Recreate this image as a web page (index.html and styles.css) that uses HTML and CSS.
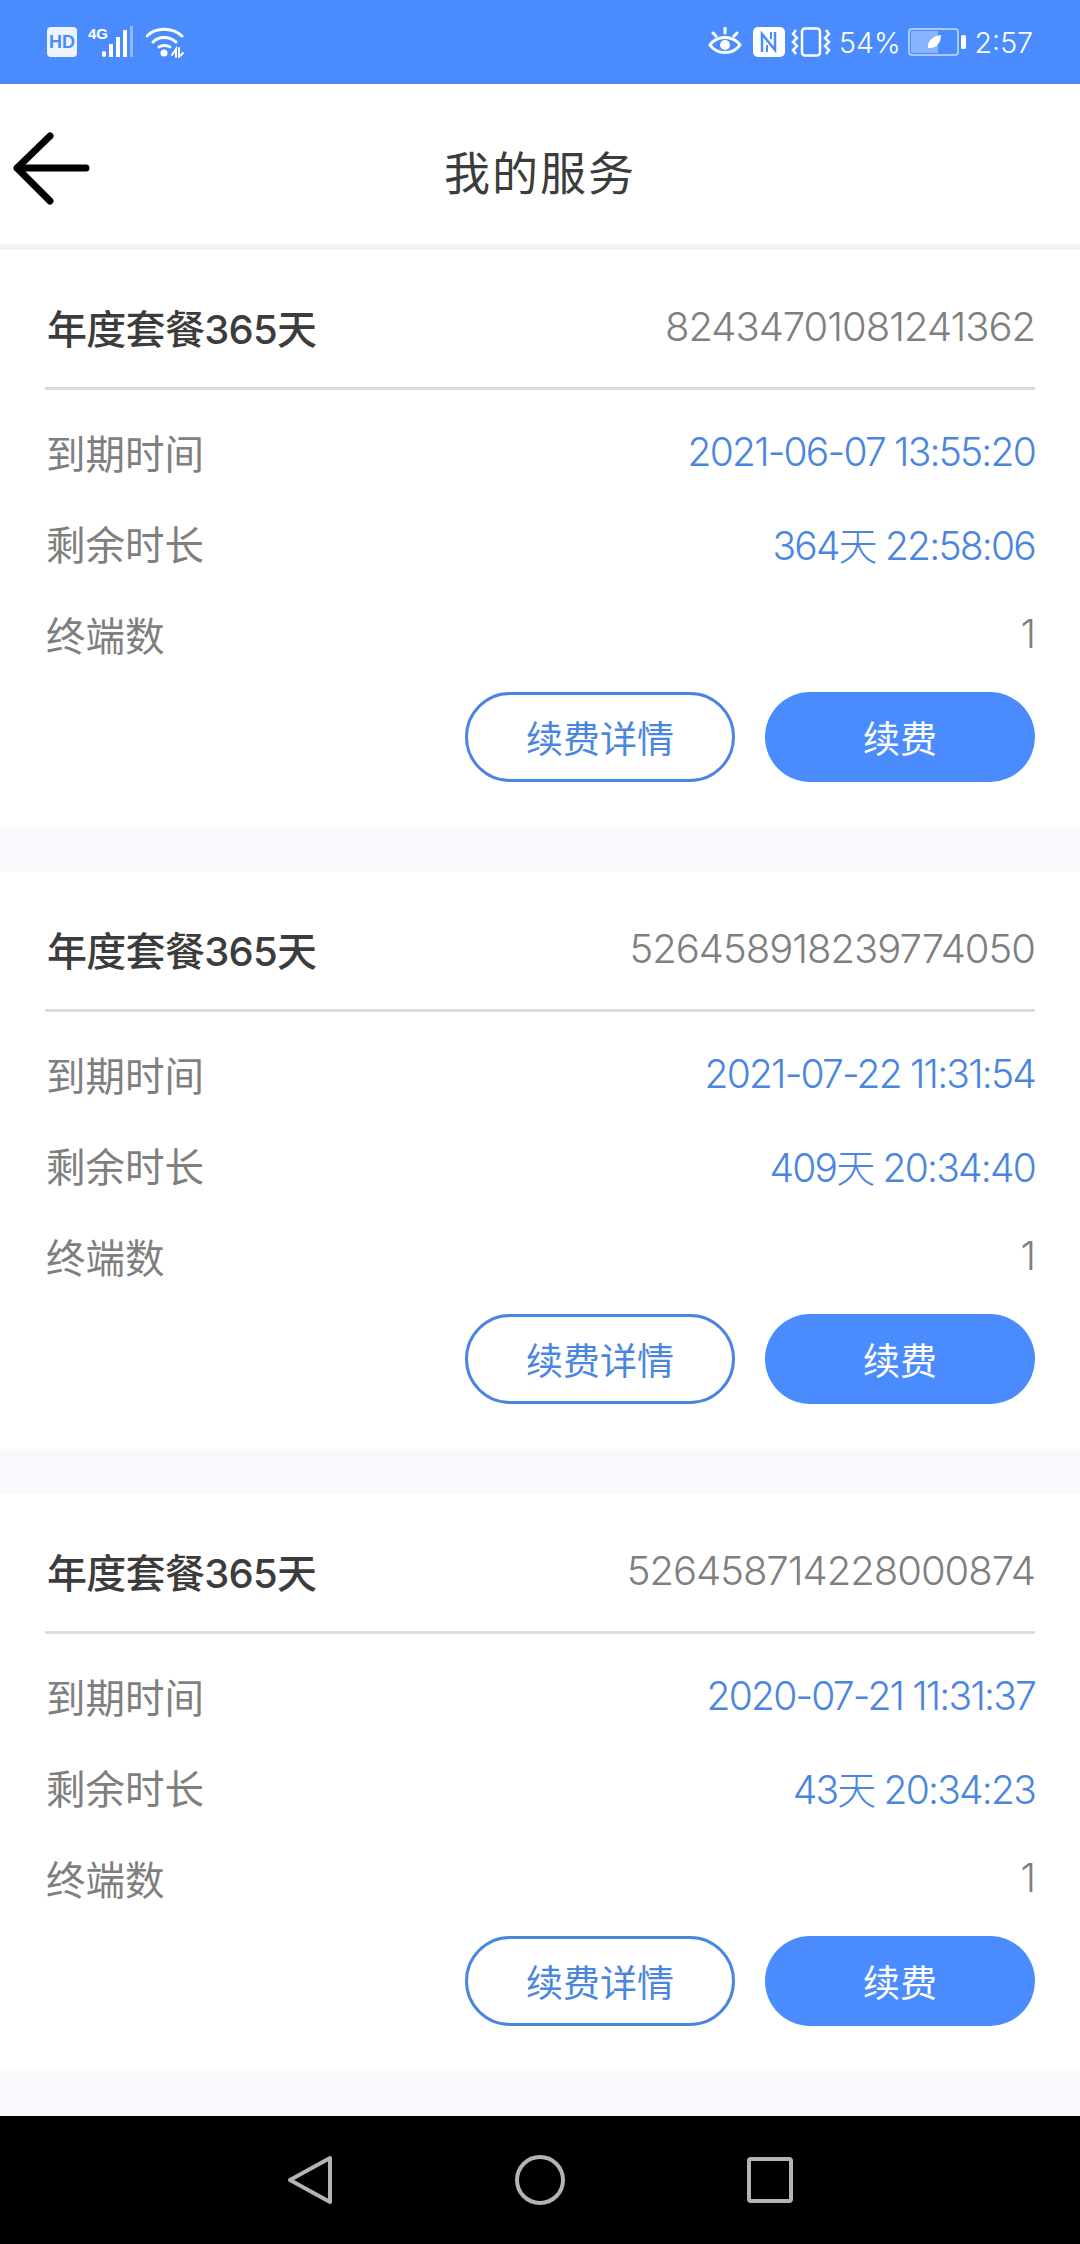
FILE: index.html
```html
<!DOCTYPE html>
<html lang="zh-CN">
<head>
    <meta charset="UTF-8">
    <meta name="viewport" content="width=device-width, initial-scale=1.0">
    <title>我的服务</title>
    <link rel="stylesheet" href="styles.css">
</head>
<body>
    <div class="status-bar">
        <div class="status-left">
            <span class="hd-badge">HD</span>
            <span class="net-label">4G</span>
            <svg class="signal" width="32" height="32" viewBox="0 0 32 32">
                <rect x="0" y="25" width="4" height="6" rx="2" fill="#fff"/>
                <rect x="7" y="18" width="4" height="13" fill="#fff"/>
                <rect x="14" y="11" width="4" height="20" fill="#fff"/>
                <rect x="21" y="4" width="4" height="27" fill="#fff"/>
                <rect x="28" y="0" width="3" height="31" fill="#fff" opacity="0.4"/>
            </svg>
            <svg class="wifi" width="38" height="32" viewBox="0 0 38 32" fill="none" stroke="#fff" stroke-width="3" stroke-linecap="round">
                <path d="M1 10C10 1 26 1 36 10"/>
                <path d="M7 16C13 10 23 10 30 16"/>
                <path d="M13 21C16 19 21 19 24 21"/>
                <circle cx="18" cy="27" r="3.5" fill="#fff" stroke="none"/>
                <path d="M26 29L30 23L30 31M33 22L33 31L37 27" stroke-width="2"/>
            </svg>
        </div>
        <div class="status-right">
            <svg class="eye" width="34" height="30" viewBox="0 0 34 30" fill="none" stroke="#fff" stroke-width="3" stroke-linecap="round">
                <path d="M2 18C9 8 25 8 32 18C25 28 9 28 2 18Z"/>
                <circle cx="17" cy="18" r="5" fill="#fff" stroke="none"/>
                <path d="M5 6L8 9M17 1L17 6M29 6L26 9"/>
            </svg>
            <svg class="nfc" width="32" height="30" viewBox="0 0 32 30">
                <rect x="0" y="0" width="32" height="30" rx="5" fill="#fff"/>
                <path d="M9 25L9 7L22 23L22 5" fill="none" stroke="#4a8cfd" stroke-width="2.5"/>
                <path d="M14 25L14 18M18 5L18 12" fill="none" stroke="#4a8cfd" stroke-width="2"/>
            </svg>
            <svg class="vibrate" width="40" height="30" viewBox="0 0 40 30" fill="none" stroke="#fff">
                <rect x="11" y="1.5" width="18" height="27" rx="3" stroke-width="2.5"/>
                <path d="M5 3L2 7L6 11L2 15L6 19L2 23L5 27" stroke-width="2.5"/>
                <path d="M35 3L38 7L34 11L38 15L34 19L38 23L35 27" stroke-width="2.5"/>
            </svg>
            <span class="percent">54%</span>
            <svg class="battery" width="58" height="28" viewBox="0 0 58 28">
                <rect x="1" y="1" width="49" height="26" rx="3" fill="none" stroke="#fff" stroke-opacity="0.7" stroke-width="1.5"/>
                <rect x="3" y="3" width="27" height="22" fill="#fff" fill-opacity="0.35"/>
                <path d="M20 20C19 12 26 8 33 7C33 15 28 21 20 20Z" fill="#fff"/>
                <rect x="53" y="7" width="5" height="14" rx="1.5" fill="#fff"/>
            </svg>
            <span class="clock">2:57</span>
        </div>
    </div>

    <header class="page-header">
        <svg class="back-arrow" width="78" height="74" viewBox="0 0 78 74" fill="none" stroke="#000" stroke-width="7" stroke-linecap="round" stroke-linejoin="round">
            <path d="M74 37L5 37M38 5L5 37L38 70"/>
        </svg>
        <h1>我的服务</h1>
    </header>

    <main class="service-list">
        <section class="card">
            <div class="card-head">
                <span class="plan-name">年度套餐365天</span>
                <span class="order-no">82434701081241362</span>
            </div>
            <div class="info-row"><span>到期时间</span><span class="value blue">2021-06-07 13:55:20</span></div>
            <div class="info-row"><span>剩余时长</span><span class="value blue">364天 22:58:06</span></div>
            <div class="info-row"><span>终端数</span><span class="value">1</span></div>
            <div class="card-actions">
                <button type="button" class="btn btn-outline">续费详情</button>
                <button type="button" class="btn btn-solid">续费</button>
            </div>
        </section>

        <section class="card">
            <div class="card-head">
                <span class="plan-name">年度套餐365天</span>
                <span class="order-no">526458918239774050</span>
            </div>
            <div class="info-row"><span>到期时间</span><span class="value blue">2021-07-22 11:31:54</span></div>
            <div class="info-row"><span>剩余时长</span><span class="value blue">409天 20:34:40</span></div>
            <div class="info-row"><span>终端数</span><span class="value">1</span></div>
            <div class="card-actions">
                <button type="button" class="btn btn-outline">续费详情</button>
                <button type="button" class="btn btn-solid">续费</button>
            </div>
        </section>

        <section class="card">
            <div class="card-head">
                <span class="plan-name">年度套餐365天</span>
                <span class="order-no">526458714228000874</span>
            </div>
            <div class="info-row"><span>到期时间</span><span class="value blue">2020-07-21 11:31:37</span></div>
            <div class="info-row"><span>剩余时长</span><span class="value blue">43天 20:34:23</span></div>
            <div class="info-row"><span>终端数</span><span class="value">1</span></div>
            <div class="card-actions">
                <button type="button" class="btn btn-outline">续费详情</button>
                <button type="button" class="btn btn-solid">续费</button>
            </div>
        </section>
    </main>

    <nav class="nav-bar">
        <svg width="46" height="50" viewBox="0 0 46 50" fill="none" stroke="#b4b4b4" stroke-width="4" stroke-linejoin="round">
            <path d="M43 3L3 25L43 47Z"/>
        </svg>
        <svg width="50" height="50" viewBox="0 0 50 50" fill="none" stroke="#b4b4b4" stroke-width="4">
            <circle cx="25" cy="25" r="23"/>
        </svg>
        <svg width="46" height="46" viewBox="0 0 46 46" fill="none" stroke="#b4b4b4" stroke-width="4" stroke-linejoin="round">
            <rect x="2" y="2" width="42" height="42" rx="2"/>
        </svg>
    </nav>
</body>
</html>
```

FILE: styles.css
```css
* {
    box-sizing: border-box;
}
body {
    font-family: Inter, "Noto Sans CJK SC", sans-serif;
    background: #f8f9fd;
    color: #7f7f7f;
    margin: 0;
    width: 1080px;
    height: 2244px;
    display: flex;
    flex-direction: column;
    overflow: hidden;
}
.status-bar {
    height: 84px;
    background-color: #4a8cfd;
    color: #fff;
    display: flex;
    justify-content: space-between;
    align-items: center;
    padding: 0 47px 0 47px;
}
.status-left,
.status-right {
    display: flex;
    align-items: center;
}
.hd-badge {
    width: 30px;
    height: 30px;
    background: #eef3fd;
    color: #4a8cfd;
    border-radius: 4px;
    font: 700 18px/30px "Liberation Sans", sans-serif;
    text-align: center;
}
.net-label {
    font: 700 15px/16px "Liberation Sans", sans-serif;
    margin: 0 -6px 16px 11px;
}
.wifi {
    margin-left: 12px;
}
.nfc {
    margin-left: 11px;
}
.vibrate {
    margin-left: 6px;
}
.percent {
    font-size: 28.5px;
    font-weight: 300;
    margin-left: 8px;
}
.battery {
    margin-left: 7px;
}
.clock {
    font-size: 28.5px;
    font-weight: 300;
    margin-left: 9px;
}
.page-header {
    height: 166px;
    background: #fff;
    border-bottom: 6px solid #f2f2f2;
    display: flex;
    align-items: center;
    justify-content: center;
    position: relative;
}
.page-header h1 {
    font-size: 46px;
    font-weight: 400;
    color: #3c3c3c;
    margin: 0;
    padding-top: 12px;
    letter-spacing: 2px;
}
.back-arrow {
    position: absolute;
    left: 12px;
    top: 47px;
}
.service-list {
    flex: 1;
    display: flex;
    flex-direction: column;
    gap: 45px;
}
.card {
    background: #fff;
    padding: 39px 45px 45px 45px;
}
.card-head {
    display: flex;
    justify-content: space-between;
    align-items: center;
    height: 101px;
    padding-bottom: 23px;
    border-bottom: 3px solid #dcdcdc;
    margin-bottom: 16px;
}
.plan-name {
    font-size: 40px;
    font-weight: 500;
    color: #3c3c3c;
    padding-left: 2px;
    letter-spacing: -0.7px;
}
.order-no {
    font-size: 40px;
    font-weight: 300;
    letter-spacing: -1px;
}
.info-row {
    height: 91px;
    font-size: 39.5px;
    display: flex;
    justify-content: space-between;
    align-items: center;
    padding-left: 1px;
}
.value {
    font-weight: 300;
    letter-spacing: -1px;
}
.blue {
    color: #4a86e0;
    font-size: 39px;
    letter-spacing: -1.8px;
}
.card-actions {
    display: flex;
    justify-content: flex-end;
    gap: 30px;
    margin-top: 13px;
}
.btn {
    width: 270px;
    height: 90px;
    border-radius: 45px;
    font-family: inherit;
    font-size: 37px;
    padding: 0;
}
.btn-outline {
    background: #fff;
    border: 3px solid #4a86e0;
    color: #4a86e0;
}
.btn-solid {
    background: #4a8cfd;
    border: none;
    color: #fff;
}
.nav-bar {
    height: 128px;
    background: #000;
    display: flex;
    justify-content: center;
    align-items: center;
    gap: 182px;
}
```
